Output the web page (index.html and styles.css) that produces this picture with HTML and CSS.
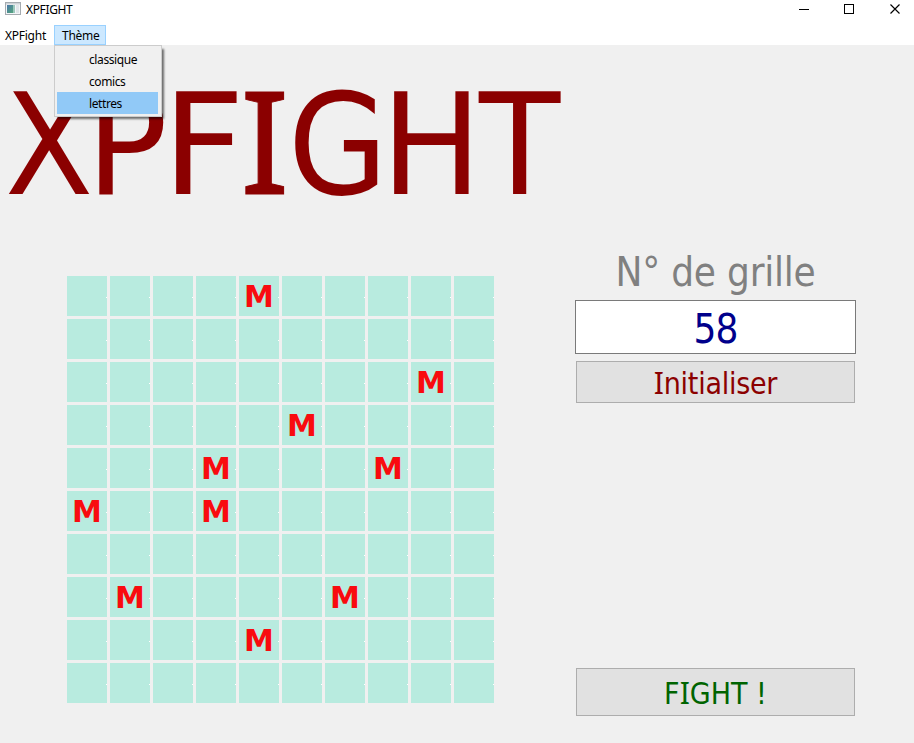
FILE: index.html
```
<!DOCTYPE html>
<html lang="fr">
<head>
<meta charset="utf-8">
<title>XPFIGHT</title>
<link rel="stylesheet" href="styles.css">
</head>
<body>
<header class="titlebar">
  <svg class="app-icon" width="16" height="14" viewBox="0 0 16 14">
    <defs><linearGradient id="g" x1="0" y1="0" x2="1" y2="1"><stop offset="0" stop-color="#4a78a8"/><stop offset="1" stop-color="#55a878"/></linearGradient></defs>
    <rect x=".5" y=".5" width="15" height="12" fill="#f4f6f8" stroke="#a5abb0"/>
    <rect x="1" y="1" width="14" height="1.500" fill="#cdd2d6"/>
    <rect x="2" y="3" width="7" height="8" fill="url(#g)"/>
    <rect x="8" y="3" width="2" height="8" fill="#9cc8bd"/>
    <rect x="11" y="3" width="3" height="8" fill="#dfe5e9"/>
  </svg>
  <span class="window-title">XPFIGHT</span>
  <svg class="controls" width="104" height="12" viewBox="0 0 104 12" shape-rendering="crispEdges">
    <rect x="0" y="5" width="10" height="1"/>
    <rect x="45.500" y=".5" width="9" height="9" fill="none" stroke="#000"/>
    <path d="M91 0L100 9M100 0L91 9" transform="translate(.5 .5)" fill="none" stroke="#000" shape-rendering="auto" stroke-width="1.150"/>
  </svg>
</header>
<nav class="menubar">
  <span class="menu">XPFight</span>
  <div class="menu open"><span>Thème</span>
    <ul class="dropdown"><li>classique</li><li>comics</li><li class="selected">lettres</li></ul>
  </div>
</nav>
<main>
  <h1><span class="x">X</span><span class="p">P</span><span class="f">F</span><span class="i">I</span><span class="g">G</span><span class="h">H</span><span class="t">T</span></h1>
  <div class="content">
    <div class="grid" id="grid"></div>
    <section class="panel">
      <label class="caption">N° de grille</label>
      <div class="field">58</div>
      <button class="init"><span class="serif-i">I</span>nitialiser</button>
      <button class="fight">F<span class="serif-i">I</span>GHT !</button>
    </section>
  </div>
</main>
<script src="grid.js"></script>
</body>
</html>
```
FILE: styles.css
```
* { box-sizing: border-box; }
body { margin: 0; width: 914px; height: 743px; overflow: hidden; background: #f0f0f0; color: #000; font-family: "Noto Sans", sans-serif; font-size: 12px; }
.titlebar { display: flex; height: 25px; background: #fff; padding: 2px 0 0 5px; }
.window-title { margin: -1px 0 0 5px; line-height: 17px; font-size: 12px; letter-spacing: -.35px; flex: 1; }
.controls { margin: 2px 11px 0 0; }
.menubar { display: flex; height: 20px; background: #fff; line-height: 22px; letter-spacing: -.25px; }
.menu { width: 54px; padding-left: 5px; }
.menu.open { position: relative; width: 52px; padding-left: 7px; background: #cce8ff; border: 1px solid #99d1ff; line-height: 20px; }
.dropdown { position: absolute; z-index: 2; left: -1px; top: 19px; width: 108px; height: 72px; margin: 0; padding: 2px; list-style: none; background: #f0f0f0; border: 1px solid #ccc; box-shadow: 3px 3px 2px -1px rgba(0,0,0,.55); letter-spacing: -.4px; }
.dropdown li { width: 101px; height: 22px; padding-left: 32px; line-height: 24px; }
.dropdown .selected { background: #91c9f7; }
h1 { display: flex; align-items: baseline; margin: 0; height: 231px; padding: 42px 0 0 4.7px; font: 400 140px/104px "DejaVu Sans", sans-serif; color: #8b0000; }
h1 span { transform-origin: 0 0; }
h1 .x { width: 81.4px; transform: scaleX(.92); }
h1 .p { width: 76.1px; transform: scaleX(.97); }
h1 .f { width: 77.8px; transform: scaleX(1.03); }
h1 .i { width: 47.6px; font-family: "Noto Sans", sans-serif; font-size: 142px; -webkit-text-stroke: 1px #8b0000; transform: scaleX(1.03); }
h1 .g { width: 93.6px; transform: scaleX(.92); }
h1 .h { width: 98.2px; transform: scaleX(.957); }
h1 .t { width: 90px; transform: scaleX(.95); }
.content { display: flex; padding-left: 67px; }
.grid { display: grid; grid-template-columns: repeat(10, 40px); grid-auto-rows: 40px; gap: 3px; width: 427px; }
.cell { background: linear-gradient(#fff, #fff) 39px 21px / 1px 1px no-repeat #b8ebdf; font: bold 30px/41px "DejaVu Sans", sans-serif; color: #f90b0f; display: flex; justify-content: center; }
.panel { display: flex; flex-direction: column; width: 281px; height: 467px; margin-left: 81px; margin-top: -27px; font-family: "DejaVu Sans Condensed", "DejaVu Sans", sans-serif; font-stretch: condensed; }
.caption { height: 51px; line-height: 47px; text-align: center; color: #808080; font-size: 40px; letter-spacing: -.2px; }
.field { height: 54px; border: 1px solid #7a7a7a; background: #fff; color: #00008b; font-size: 40px; line-height: 56px; letter-spacing: -1px; text-align: center; }
button { margin: 0 1px; padding: 3px 0 0; border: 1px solid #adadad; background: #e1e1e1; font: inherit; font-size: 30px; line-height: 37px; letter-spacing: -.25px; }
.serif-i { font-family: "Noto Sans", sans-serif; line-height: 1; }
.init { margin-top: 7px; height: 42px; color: #8b0000; }
.fight { margin-top: auto; height: 48px; color: #006400; letter-spacing: 0; }
```
FILE: grid.js
```
const mines = new Set([4, 28, 35, 43, 47, 50, 53, 71, 76, 84]);
const grid = document.getElementById("grid");
for (let i = 0; i < 100; i++) {
  const cell = document.createElement("div");
  cell.className = "cell";
  if (mines.has(i)) cell.textContent = "M";
  grid.append(cell);
}
```
